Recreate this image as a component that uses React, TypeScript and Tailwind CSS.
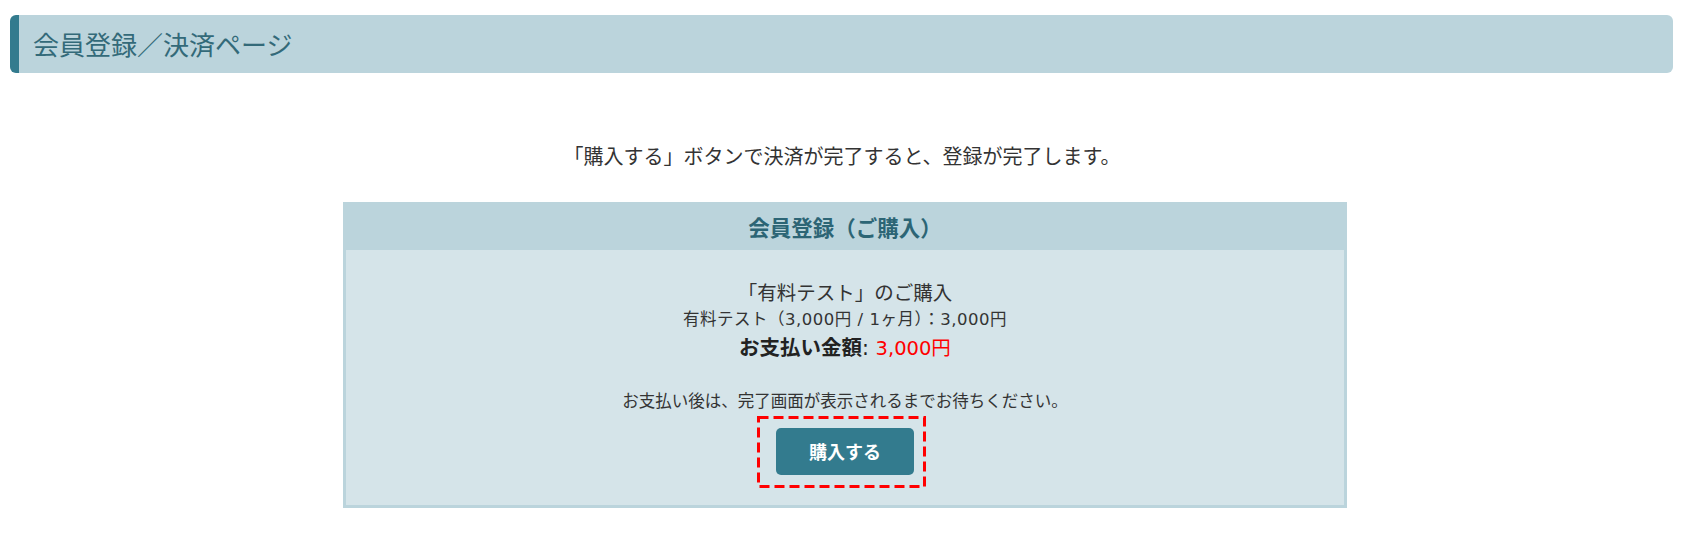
import React from "react";

export default function App() {
  return (
    <div className="min-h-[548px] bg-white font-['Noto_Sans_CJK_JP','Noto_Sans',sans-serif] text-[#333]">
      <div className="pt-[15px] pl-[10px] pr-[11px]">
        <div className="flex h-[58px] items-center rounded-[6px] border-l-[9px] border-[#337b8e] bg-[#bbd4dc] pl-[14px] text-[26px] leading-none text-[#336a79]">
          会員登録／決済ページ
        </div>
      </div>

      <p className="mt-[68px] text-center text-[20px] leading-[30px] text-[#333]">
        「購入する」ボタンで決済が完了すると、登録が完了します。
      </p>

      <div className="pl-[6px] pt-[31px]">
        <div className="mx-auto w-[1004px] border-[3px] border-[#bbd4dc] bg-[#d5e4e9]">
          <div className="flex h-[45px] items-center justify-center bg-[#bbd4dc] text-[21.5px] font-bold text-[#2c6575]">
            会員登録（ご購入）
          </div>
          <div className="flex flex-col items-center pt-[28px] pb-[17px]">
            <div className="h-[28px] text-[19.5px] leading-[28px] text-[#333]">「有料テスト」のご購入</div>
            <div className="flex h-[27px] items-center font-['DejaVu_Sans','Noto_Sans_CJK_JP',sans-serif] text-[16.5px] leading-[27px] tracking-[0.5px] text-[#333]">
              有料テスト（3,000円 / 1ヶ月）：3,000円
            </div>
            <div className="flex h-[27px] items-baseline text-[20.5px] leading-[27px]">
              <span className="font-bold text-[#222]">お支払い金額</span>
              <span className="font-['DejaVu_Sans','Noto_Sans_CJK_JP',sans-serif] whitespace-pre text-[#222]">: </span>
              <span className="font-['DejaVu_Sans','Noto_Sans_CJK_JP',sans-serif] text-[19.5px] text-[#ff0000]">3,000円</span>
            </div>
            <div className="mt-[28px] text-[16.5px] leading-[24px] text-[#333]">
              お支払い後は、完了画面が表示されるまでお待ちください。
            </div>
            <div className="relative mt-[4px] mr-[7px] h-[72px] w-[169px] pt-[12px] pl-[19px]">
              <svg className="absolute inset-0" width="169" height="72" viewBox="0 0 169 72">
                <rect x="1.5" y="1.5" width="166" height="69" fill="none" stroke="#ff0000" strokeWidth="3" strokeDasharray="10 5" />
              </svg>
              <button className="relative flex h-[47px] w-[138px] items-center justify-center rounded-[5px] bg-[#337b8e] text-[18px] font-bold text-white">
                購入する
              </button>
            </div>
          </div>
        </div>
      </div>
    </div>
  );
}
